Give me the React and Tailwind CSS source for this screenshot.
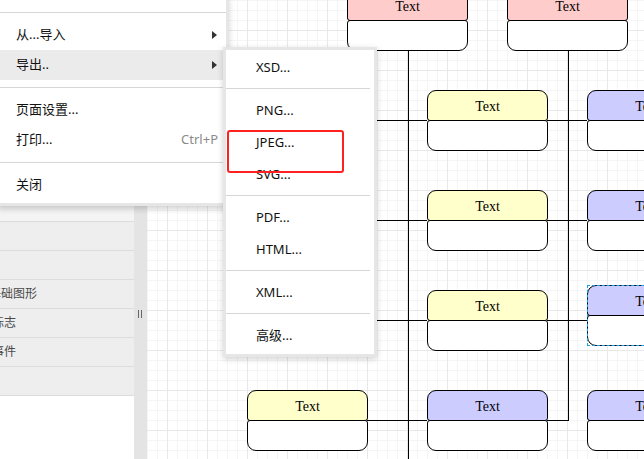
import React from 'react';

const nodes = [
  { x: 200, y: -10, fill: 'bg-[#ffcccc]' },
  { x: 360, y: -10, fill: 'bg-[#ffcccc]' },
  { x: 280, y: 90, fill: 'bg-[#ffffcc]' },
  { x: 280, y: 190, fill: 'bg-[#ffffcc]' },
  { x: 280, y: 290, fill: 'bg-[#ffffcc]' },
  { x: 100, y: 390, fill: 'bg-[#ffffcc]' },
  { x: 280, y: 390, fill: 'bg-[#ccccff]' },
  { x: 440, y: 90, fill: 'bg-[#ccccff]' },
  { x: 440, y: 190, fill: 'bg-[#ccccff]' },
  { x: 440, y: 285, fill: 'bg-[#ccccff]', selected: true },
  { x: 440, y: 390, fill: 'bg-[#ccccff]' },
];

// connector segments, canvas coordinates
const lines = [
  [261.5, 50, 261.5, 470],
  [421.5, 50, 421.5, 420.5],
  [220, 120.5, 280, 120.5],
  [220, 220.5, 280, 220.5],
  [220, 320.5, 280, 320.5],
  [220, 420.5, 280, 420.5],
  [400, 120.5, 440, 120.5],
  [400, 220.5, 440, 220.5],
  [400, 320.5, 440, 320.5],
  [400, 420.5, 421.5, 420.5],
];

// sidebar section titles, clipped by the panel's left edge
const sidebarRows = [
  '', '', '', '', '', '', '', '', '',
  { label: '基础图形', cls: 'ml-[-11px]' },
  { label: '标志', cls: 'ml-[-8px]' },
  { label: '事件', cls: 'ml-[-8px]' },
  '',
];

function Node({ x, y, fill, selected }) {
  return (
    <div className="absolute w-[121px]" style={{ left: x, top: y }}>
      <div
        className={`h-[31px] border border-black rounded-t-[9px] rounded-b-[3px] flex items-center justify-center pt-px font-['Liberation_Serif',serif] text-[14px] text-black ${fill}`}
      >
        Text
      </div>
      <div className="h-[31px] -mt-px border border-black bg-white rounded-t-[3px] rounded-b-[9px]" />
      {selected && (
        <div className="absolute inset-0 h-[61px] border border-dashed border-[#1ea0e6]" />
      )}
    </div>
  );
}

function Arrow() {
  return (
    <svg width="5" height="8" viewBox="0 0 5 8" className="shrink-0">
      <polygon points="0,0 5,4 0,8" fill="#333" />
    </svg>
  );
}

function Sep({ className = '' }) {
  return <div className={`h-px bg-[#d6d6d6] ${className}`} />;
}

function FileMenu() {
  return (
    <div className="absolute left-[-3px] top-[-3px] w-[232px] border-[3px] border-[#e6e6e6] bg-white shadow-[0_3px_6px_rgba(0,0,0,0.18)] text-[13px] text-[#111]">
      <div className="h-[12px]" />
      <Sep className="mb-[7px]" />
      <div className="h-[30px] flex items-center justify-between pl-[16px] pr-[9px]">
        <span>从...导入</span>
        <Arrow />
      </div>
      <div className="h-[30px] flex items-center justify-between pl-[16px] pr-[9px] bg-[#ebebeb]">
        <span>导出..</span>
        <Arrow />
      </div>
      <Sep className="mt-[7px] mb-[7px]" />
      <div className="h-[30px] flex items-center pl-[16px]">页面设置...</div>
      <div className="h-[30px] flex items-center justify-between pl-[16px] pr-[8px]">
        <span>打印...</span>
        <span className="text-[#8a8a8a]">Ctrl+P</span>
      </div>
      <Sep className="mt-[7px] mb-[7px]" />
      <div className="h-[30px] flex items-center pl-[16px]">关闭</div>
      <div className="h-[3px]" />
    </div>
  );
}

function ExportMenu() {
  const groups = [['XSD...'], ['PNG...', 'JPEG...', 'SVG...'], ['PDF...', 'HTML...'], ['XML...'], ['高级...']];
  return (
    <div className="absolute left-[223px] top-[47px] w-[154px] border-[3px] border-[#e6e6e6] bg-white shadow-[0_2px_6px_rgba(0,0,0,0.18)] text-[13px] text-[#111] py-[2px]">
      {groups.map((g, gi) => (
        <div key={gi}>
          {gi > 0 && <Sep className="mt-[4px] mb-[6px] mr-[4px]" />}
          {g.map((item) => (
            <div key={item} className="h-[32px] flex items-center pl-[30px]">
              {item}
            </div>
          ))}
        </div>
      ))}
    </div>
  );
}

export default function App() {
  return (
    <div className="relative w-[644px] h-[459px] overflow-hidden flex bg-white font-['Noto_Sans','Noto_Sans_CJK_SC',sans-serif]">
      {/* Sidebar */}
      <div className="w-[134px] shrink-0 pt-[19px] bg-white overflow-hidden">
        {sidebarRows.map((row, i) => (
          <div
            key={i}
            className={`h-[29px] border-b border-[#dcdcdc] flex items-center text-[12px] text-[#4a4a4a] whitespace-nowrap ${i === 6 ? 'bg-[#f4f4f4]' : 'bg-[#eeeeee]'}`}
          >
            {row && <span className={row.cls}>{row.label}</span>}
          </div>
        ))}
      </div>

      {/* Splitter */}
      <div className="relative w-[13px] shrink-0 bg-[#e4e4e4]">
        <div className="absolute left-[4px] top-[310px] flex gap-[2px]">
          <div className="w-px h-[8px] bg-[#666]" />
          <div className="w-px h-[8px] bg-[#666]" />
        </div>
      </div>

      {/* Canvas */}
      <div className="relative flex-1 overflow-hidden bg-white bg-[linear-gradient(to_right,#e8e8e8_1px,transparent_1px),linear-gradient(to_bottom,#e8e8e8_1px,transparent_1px),linear-gradient(to_right,#f5f5f5_1px,transparent_1px),linear-gradient(to_bottom,#f5f5f5_1px,transparent_1px)] [background-size:40px_40px,40px_40px,10px_10px,10px_10px] [background-position:20px_30px]">
        <svg className="absolute inset-0 w-full h-full" shapeRendering="crispEdges">
          {lines.map(([x1, y1, x2, y2], i) => (
            <line key={i} x1={x1} y1={y1} x2={x2} y2={y2} stroke="#000" strokeWidth="1" />
          ))}
        </svg>
        {nodes.map((n, i) => (
          <Node key={i} {...n} />
        ))}
      </div>

      <FileMenu />
      <ExportMenu />

      {/* red highlight */}
      <div className="absolute left-[227px] top-[130px] w-[117px] h-[43px] border-2 border-[#ff2020] rounded-[3px]" />
    </div>
  );
}
